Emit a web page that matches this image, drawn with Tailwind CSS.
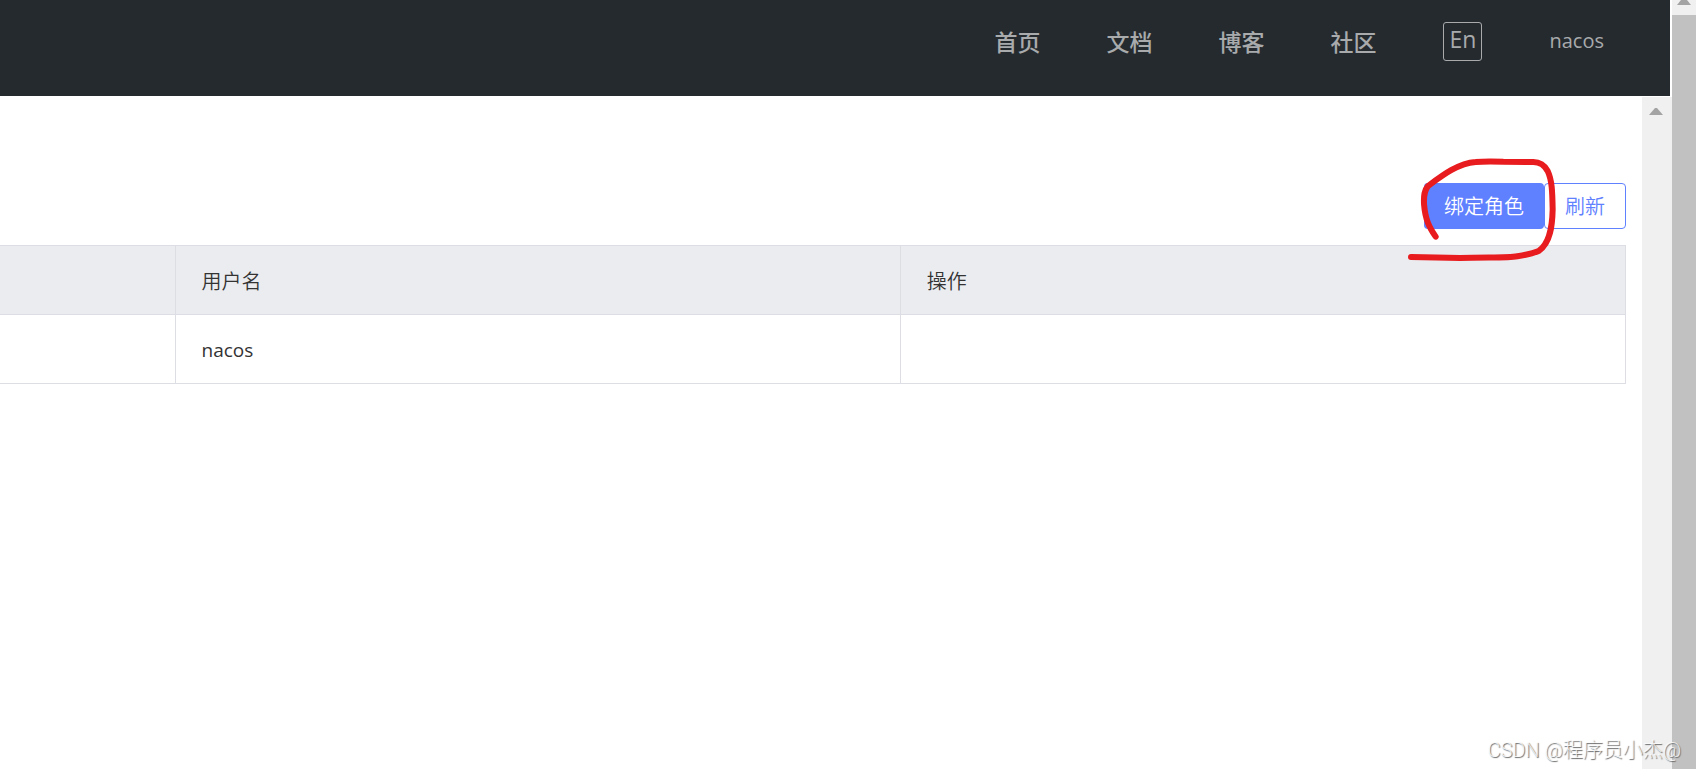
<!DOCTYPE html>
<html lang="zh-CN">
<head>
<meta charset="utf-8">
<meta name="viewport" content="width=device-width, initial-scale=1">
<title>Nacos</title>
<script src="https://cdn.jsdelivr.net/npm/@tailwindcss/browser@4"></script>
</head>
<body class="relative flex min-h-screen overflow-x-hidden bg-white font-['Open_Sans','Noto_Sans_CJK_SC',sans-serif] text-[#333333]">
  <div class="flex min-w-0 flex-1 flex-col">
    <header class="mr-0.5 flex h-24 items-start justify-end bg-[#252a2f] pr-[66px] text-[#a8aaac]">
      <nav class="flex h-[82px] items-center gap-[67px] text-[23px] leading-8 font-medium">
        <div class="flex gap-[66px] font-['Noto_Sans_CJK_SC',sans-serif]">
          <a href="#">首页</a>
          <a href="#">文档</a>
          <a href="#">博客</a>
          <a href="#">社区</a>
        </div>
        <button type="button" class="flex h-[39px] w-[39px] justify-center rounded-[3px] border border-[#a8aaac] leading-8">En</button>
        <a href="#" class="text-[20px]">nacos</a>
      </nav>
    </header>
    <div class="mt-px flex flex-1">
      <main class="min-w-0 flex-1 pt-[86px] pr-4">
        <div class="flex justify-end font-['Noto_Sans_CJK_SC',sans-serif] text-[20px] font-[350]">
          <button type="button" class="h-[46px] rounded bg-[#5f80ff] px-5 leading-[46px] text-white">绑定角色</button>
          <button type="button" class="h-[46px] rounded border border-[#5f80ff] px-5 leading-[44px] text-[#5f80ff]">刷新</button>
        </div>
        <table class="mt-4 w-full table-fixed border-collapse border-y border-[#dcdee3] text-left text-[20px]">
          <colgroup><col class="w-[175px]"><col><col></colgroup>
          <thead>
            <tr class="h-[69px] bg-[#ebecf0]">
              <th class="border-r border-b border-[#dcdee3]"></th>
              <th class="border-r border-b border-[#dcdee3] px-[26px] pt-0.5 font-['Noto_Sans_CJK_SC',sans-serif] font-[350]">用户名</th>
              <th class="border-r border-b border-[#dcdee3] px-[26px] pt-0.5 font-['Noto_Sans_CJK_SC',sans-serif] font-[350]">操作</th>
            </tr>
          </thead>
          <tbody>
            <tr class="h-[69px]">
              <td class="border-r border-[#dcdee3]"></td>
              <td class="border-r border-[#dcdee3] px-[26px] pt-0.5 text-[19px]">nacos</td>
              <td class="border-r border-[#dcdee3]"></td>
            </tr>
          </tbody>
        </table>
      </main>
      <div class="flex w-[30px] justify-center bg-[#f0f0f0] pt-[11px] pr-0.5" aria-hidden="true">
        <svg class="h-[7px] w-3.5" viewBox="0 0 14 7" fill="#a3a3a3"><path d="M0 7 6 0h2l6 7z"/></svg>
      </div>
    </div>
  </div>
  <div class="flex w-6 flex-col items-center bg-[#f0f0f0]" aria-hidden="true">
    <svg class="mb-[10px] h-[5px] w-3.5 shrink-0" viewBox="0 0 14 5" fill="#a3a3a3"><path d="M0 5 4 0h6l4 5z"/></svg>
    <div class="w-full flex-1 bg-[#c1c1c1]"></div>
  </div>

  <!-- Hand-drawn marker around the bind-role button -->
  <svg class="pointer-events-none absolute top-[140px] right-0 h-[140px] w-[306px]" viewBox="0 0 918 420" fill="none" stroke="#e81c1e" stroke-width="18" stroke-linecap="round" stroke-linejoin="round" aria-hidden="true">
    <path d="M137 290C118 262 106 240 102 192C101 165 103 151 114 138C160 104 205 70 257 66Q285 63 340 65L427 66C449 65 463 74 473 93C486 120 487 155 488 208C487 253 482 309 446 333Q424 342 382 349C350 355 290 351 210 354Q140 353 63 351"/>
  </svg>
  <p class="absolute right-[15px] bottom-1 font-['Roboto','Noto_Sans_CJK_SC',sans-serif] text-[20px] leading-[30px] font-light text-white/80 [text-shadow:1px_1px_1px_#666]">CSDN @程序员小杰@</p>
</body>
</html>
